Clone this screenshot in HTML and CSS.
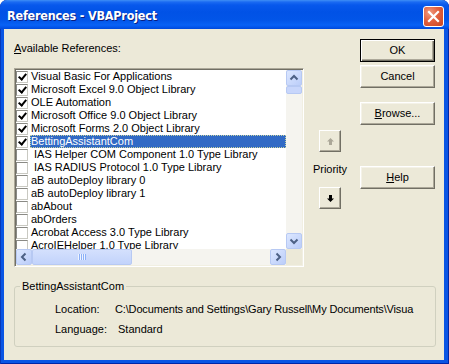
FILE: index.html
```html
<!DOCTYPE html>
<html>
<head>
<meta charset="utf-8">
<title>References - VBAProject</title>
<link rel="stylesheet" href="styles.css">
</head>
<body>
<div class="window">
  <div class="titlebar">
    <span class="title">References - VBAProject</span>
    <span class="close"><svg width="21" height="21" viewBox="0 0 21 21"><path d="M6 6 L15 15 M15 6 L6 15" stroke="#fff" stroke-width="2.2" stroke-linecap="square"/></svg></span>
  </div>
  <div class="client">
    <div class="top">
      <div class="leftcol">
        <div class="label"><u>A</u>vailable References:</div>
        <div class="listbox">
          <div class="listmain">
            <div class="items">
              <div class="row"><span class="cb on"></span><span class="txt">Visual Basic For Applications</span></div>
              <div class="row"><span class="cb on"></span><span class="txt">Microsoft Excel 9.0 Object Library</span></div>
              <div class="row"><span class="cb on"></span><span class="txt">OLE Automation</span></div>
              <div class="row"><span class="cb on"></span><span class="txt">Microsoft Office 9.0 Object Library</span></div>
              <div class="row"><span class="cb on"></span><span class="txt">Microsoft Forms 2.0 Object Library</span></div>
              <div class="row sel"><span class="cb on"></span><span class="txt">BettingAssistantCom</span></div>
              <div class="row"><span class="cb"></span><span class="txt">&nbsp;IAS Helper COM Component 1.0 Type Library</span></div>
              <div class="row"><span class="cb"></span><span class="txt">&nbsp;IAS RADIUS Protocol 1.0 Type Library</span></div>
              <div class="row"><span class="cb"></span><span class="txt">aB autoDeploy library 0</span></div>
              <div class="row"><span class="cb"></span><span class="txt">aB autoDeploy library 1</span></div>
              <div class="row"><span class="cb"></span><span class="txt">abAbout</span></div>
              <div class="row"><span class="cb"></span><span class="txt">abOrders</span></div>
              <div class="row"><span class="cb"></span><span class="txt">Acrobat Access 3.0 Type Library</span></div>
              <div class="row"><span class="cb"></span><span class="txt">AcroIEHelper 1.0 Type Library</span></div>
            </div>
            <div class="vscroll">
              <div class="sbtn"><svg width="16" height="16" viewBox="0 0 16 16"><path d="M4.5 9.5 L8 6 L11.5 9.5" fill="none" stroke="#4D6185" stroke-width="2"/></svg></div>
              <div class="vthumb"></div>
              <div class="vtrack"></div>
              <div class="sbtn"><svg width="16" height="16" viewBox="0 0 16 16"><path d="M4.5 6.5 L8 10 L11.5 6.5" fill="none" stroke="#4D6185" stroke-width="2"/></svg></div>
            </div>
          </div>
          <div class="hrow">
            <div class="hscroll">
              <div class="sbtn"><svg width="16" height="16" viewBox="0 0 16 16"><path d="M9.5 4.5 L6 8 L9.5 11.5" fill="none" stroke="#4D6185" stroke-width="2"/></svg></div>
              <div class="hthumb"><span class="grip"></span></div>
              <div class="htrack"></div>
              <div class="sbtn"><svg width="16" height="16" viewBox="0 0 16 16"><path d="M6.5 4.5 L10 8 L6.5 11.5" fill="none" stroke="#4D6185" stroke-width="2"/></svg></div>
            </div>
            <div class="corner"></div>
          </div>
        </div>
      </div>
      <div class="prio">
        <div class="pbtn"><svg width="9" height="9" viewBox="0 0 9 9"><path d="M4.5 1 L8 4.5 L6 4.5 L6 8 L3 8 L3 4.5 L1 4.5 Z" fill="#ACA899"/></svg></div>
        <div class="plabel">Priority</div>
        <div class="pbtn"><svg width="9" height="9" viewBox="0 0 9 9"><path d="M4.5 8 L8 4.5 L6 4.5 L6 1 L3 1 L3 4.5 L1 4.5 Z" fill="#000"/></svg></div>
      </div>
      <div class="buttons">
        <div class="btn def">OK</div>
        <div class="btn cancel">Cancel</div>
        <div class="btn browse"><u>B</u>rowse...</div>
        <div class="btn help"><u>H</u>elp</div>
      </div>
    </div>
    <fieldset class="group">
      <legend>BettingAssistantCom</legend>
      <div class="info">
        <span class="k">Location:</span><span class="v path">C:\Documents and Settings\Gary Russell\My Documents\Visua</span>
        <span class="k">Language:</span><span class="v lang">Standard</span>
      </div>
    </fieldset>
  </div>
</div>
</body>
</html>
```

FILE: styles.css
```css
* { box-sizing: border-box; }
html, body { margin: 0; padding: 0; background: #fff; }
body { font-family: "Liberation Sans", Arial, sans-serif; font-size: 11px; color: #000; }

.window {
  width: 449px; height: 364px;
  background: #0A55E4;
  border-radius: 7px 7px 0 0;
  display: flex; flex-direction: column;
  box-shadow: inset 1px 0 #0838B8, inset -1px 0 #0026A8, inset 0 -1px #0026A8;
  overflow: hidden;
}
.titlebar {
  height: 29px; flex: none;
  display: flex; align-items: center; justify-content: space-between;
  padding: 0 5px 0 7px;
  background: linear-gradient(#3F8FF5 0, #1B6BF2 2px, #0758EC 5px, #0152E6 12px, #0255E8 20px, #0862F5 25px, #0356EC 27px, #0049DA 29px);
  border-radius: 7px 7px 0 0;
}
.title {
  color: #fff; font-weight: bold; font-size: 12.5px;
  font-family: "DejaVu Sans Condensed", "DejaVu Sans", sans-serif;
  text-shadow: 1px 1px #0A1E80;
  letter-spacing: -0.2px;
  margin-top: 1px;
}
.close {
  width: 21px; height: 21px; display: block;
  border: 1px solid #fff; border-radius: 3px;
  background: radial-gradient(circle at 30% 30%, #F09B80 0, #E2603F 45%, #C94621 100%);
  margin-top: 3px;
}
.close svg { display: block; margin: -1px; }

.client {
  margin: 0 5px 4px 4px;
  flex: 1;
  background: #ECE9D8;
  display: flex; flex-direction: column;
}
.top { display: flex; align-items: flex-start; }
.leftcol { margin: 13px 0 0 10px; }
.label { line-height: 13px; height: 13px; }
.label u, .btn u { text-decoration: underline; text-underline-offset: 1px; }

.listbox {
  margin-top: 13px;
  width: 290px; height: 199px;
  border: 1px solid; border-color: #ACA899 #fff #fff #ACA899;
  box-shadow: inset 1px 1px #716F64, inset -1px -1px #F1EFE2;
  padding: 1px;
  background: #fff;
  display: flex; flex-direction: column;
}
.listmain { display: flex; height: 179px; }
.items { width: 270px; overflow: hidden; background: #fff; }
.row { height: 13px; display: flex; align-items: center; white-space: nowrap; line-height: 13px; }
.cb {
  flex: none; width: 12px; height: 12px; margin: 0 2px 0 0;
  border: 1px solid; border-color: #8A8A85 #C9C9C2 #C9C9C2 #8A8A85;
  background: #fff;
  position: relative;
}
.cb.on::after {
  content: ""; position: absolute;
  width: 3px; height: 6px;
  border: solid #000; border-width: 0 2px 2px 0;
  transform: rotate(40deg);
  left: 3px; top: 0px;
}
.txt { padding: 0 1px; height: 13px; }
.row.sel .txt {
  flex: 1; background: #316AC5; color: #fff;
  outline: 1px dotted #C8D3A0; outline-offset: -1px;
}

.vscroll { width: 16px; display: flex; flex-direction: column; background: #F5F4EF; }
.sbtn {
  width: 16px; height: 16px; flex: none;
  border: 1px solid #B7C9F3; border-radius: 2px;
  background: linear-gradient(135deg, #DCE7FF, #BBCDF9);
}
.sbtn svg { display: block; margin: -1px; }
.vthumb {
  height: 8px; flex: none;
  border: 1px solid #B7C9F3; border-radius: 2px;
  background: #C8D6FB;
}
.vtrack { flex: 1; }

.hrow { display: flex; height: 16px; }
.hscroll { width: 270px; display: flex; background: #F5F4EF; }
.hthumb {
  width: 100px; flex: none;
  border: 1px solid #B7C9F3; border-radius: 2px;
  background: linear-gradient(#D4E0FD, #C2D3FB);
  display: flex; align-items: center; justify-content: center;
}
.grip {
  width: 8px; height: 6px;
  background: repeating-linear-gradient(90deg, #EEF4FE 0 1px, #8CB0F8 1px 2px);
}
.htrack { flex: 1; }
.corner { width: 16px; background: #ECE9D8; }

.prio {
  width: 40px; margin: 101px 0 0 6px;
  display: flex; flex-direction: column; align-items: center;
}
.pbtn {
  width: 22px; height: 22px;
  border: 1px solid; border-color: #fff #716F64 #716F64 #fff;
  box-shadow: inset -1px -1px #ACA899;
  background: #ECE9D8;
  display: flex; align-items: center; justify-content: center;
}
.plabel { line-height: 13px; margin: 11px 0 11px; }

.buttons { margin: 10px 0 0 10px; display: flex; flex-direction: column; }
.btn {
  width: 75px; height: 23px;
  border: 1px solid; border-color: #fff #716F64 #716F64 #fff;
  box-shadow: inset -1px -1px #ACA899, inset 1px 1px #F4F2E8;
  background: #ECE9D8;
  display: flex; align-items: center; justify-content: center;
  line-height: 13px;
}
.btn.def {
  border: 1px solid #000;
  box-shadow: inset 1px 1px #fff, inset -1px -1px #716F64, inset -2px -2px #ACA899;
}
.btn.cancel { margin-top: 3px; }
.btn.browse { margin-top: 14px; }
.btn.help { margin-top: 41px; }

.group {
  margin: 13px 0 0 10px;
  width: 422px;
  border: 1px solid #D0D0BF;
  border-radius: 3px;
  padding: 10px 0 10px 0;
  min-width: 0;
}
.group legend { padding: 0 2px; margin-left: 5px; line-height: 13px; color: #000; }
.info {
  display: grid; grid-template-columns: 60px 320px;
  row-gap: 7px; line-height: 13px;
  padding-left: 40px;
}
.v { white-space: nowrap; }
.path { letter-spacing: -0.15px; }
.lang { padding-left: 3px; }
```
